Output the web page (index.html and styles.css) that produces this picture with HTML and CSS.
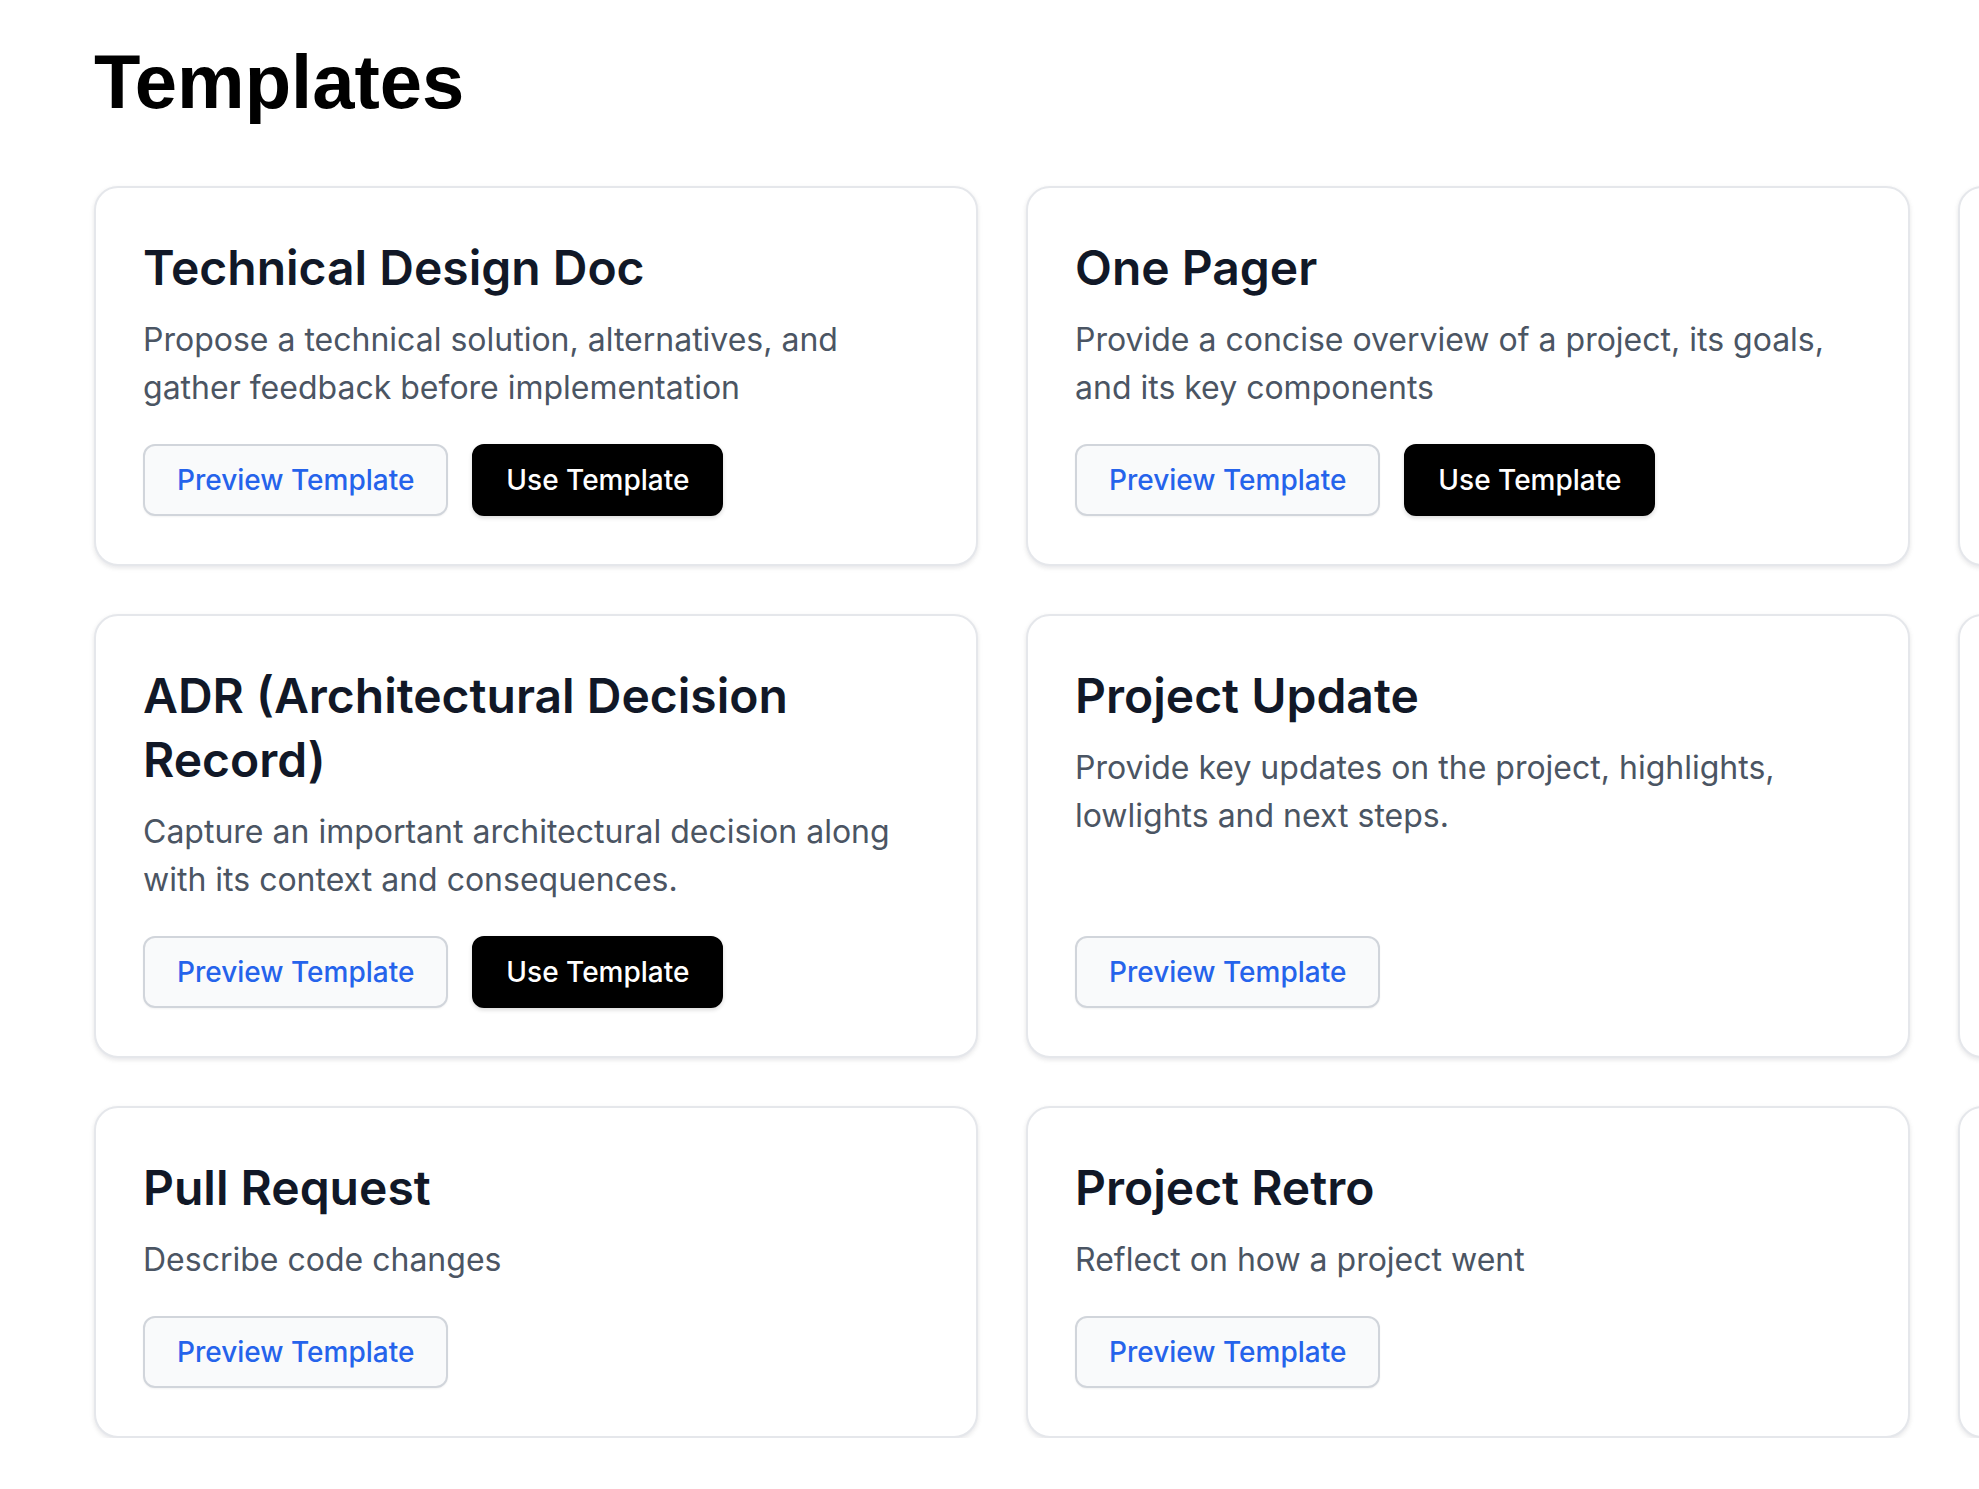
FILE: index.html
```html
<!DOCTYPE html>
<html>
<head>
    <meta charset="utf-8">
    <title>Templates</title>
    <link rel="stylesheet" href="styles.css">
</head>
<body>

<div class="page">
    <h1 class="page-title">Templates</h1>

    <div class="template-grid">

        <div class="template-card">
            <h2 class="card-title">Technical Design Doc</h2>
            <p class="card-desc">Propose a technical solution, alternatives, and gather feedback before implementation</p>
            <div class="card-actions">
                <button class="btn btn-preview">Preview Template</button>
                <button class="btn btn-use">Use Template</button>
            </div>
        </div>

        <div class="template-card">
            <h2 class="card-title">One Pager</h2>
            <p class="card-desc">Provide a concise overview of a project, its goals, and its key components</p>
            <div class="card-actions">
                <button class="btn btn-preview">Preview Template</button>
                <button class="btn btn-use">Use Template</button>
            </div>
        </div>

        <!-- third column runs off the screen -->
        <div class="template-card"></div>

        <div class="template-card">
            <h2 class="card-title">ADR (Architectural Decision Record)</h2>
            <p class="card-desc">Capture an important architectural decision along with its context and consequences.</p>
            <div class="card-actions">
                <button class="btn btn-preview">Preview Template</button>
                <button class="btn btn-use">Use Template</button>
            </div>
        </div>

        <div class="template-card">
            <h2 class="card-title">Project Update</h2>
            <p class="card-desc">Provide key updates on the project, highlights, lowlights and next steps.</p>
            <div class="card-actions">
                <button class="btn btn-preview">Preview Template</button>
            </div>
        </div>

        <div class="template-card"></div>

        <div class="template-card">
            <h2 class="card-title">Pull Request</h2>
            <p class="card-desc">Describe code changes</p>
            <div class="card-actions">
                <button class="btn btn-preview">Preview Template</button>
            </div>
        </div>

        <div class="template-card">
            <h2 class="card-title">Project Retro</h2>
            <p class="card-desc">Reflect on how a project went</p>
            <div class="card-actions">
                <button class="btn btn-preview">Preview Template</button>
            </div>
        </div>

        <div class="template-card"></div>

    </div>
</div>

</body>
</html>
```

FILE: styles.css
```css
body {
    margin: 0;
    background-color: #ffffff;
    font-family: Inter, "Noto Sans", sans-serif;
    overflow: hidden;
}
.page {
    padding: 42px 0 0 94px;
}
.page-title {
    margin: 0 0 64px 0;
    font-family: "Liberation Sans", Arial, sans-serif;
    font-size: 76px;
    line-height: 80px;
    font-weight: 700;
    color: #000;
}
.template-grid {
    display: grid;
    grid-template-columns: repeat(3, 884px);
    gap: 48px;
}
.template-card {
    display: flex;
    flex-direction: column;
    padding: 48px 48px 48px 47px;
    border: 2px solid #e5e7eb;
    border-radius: 24px;
    background: #fff;
    box-shadow: 0 2px 4px rgba(17, 24, 39, 0.06), 0 2px 6px rgba(17, 24, 39, 0.05);
}
.card-title {
    margin: 0 0 16px 0;
    font-size: 48px;
    line-height: 64px;
    font-weight: 600;
    color: #111827;
}
.card-desc {
    margin: 0;
    font-size: 32px;
    line-height: 48px;
    color: #4b5563;
}
.card-actions {
    display: flex;
    gap: 24px;
    margin-top: auto;
    padding-top: 32px;
}
.btn {
    display: inline-flex;
    align-items: center;
    height: 72px;
    padding: 0 32px;
    border-radius: 12px;
    font-family: Inter, "Noto Sans", sans-serif;
    font-size: 28px;
    font-weight: 500;
    cursor: pointer;
}
.btn-preview {
    background: #f9fafb;
    border: 2px solid #d1d5db;
    color: #2563eb;
    box-shadow: 0 1px 2px rgba(0, 0, 0, 0.05);
}
.btn-use {
    background: #000;
    border: 2px solid #000;
    color: #fff;
    box-shadow: 0 2px 4px rgba(0, 0, 0, 0.15);
}
```
